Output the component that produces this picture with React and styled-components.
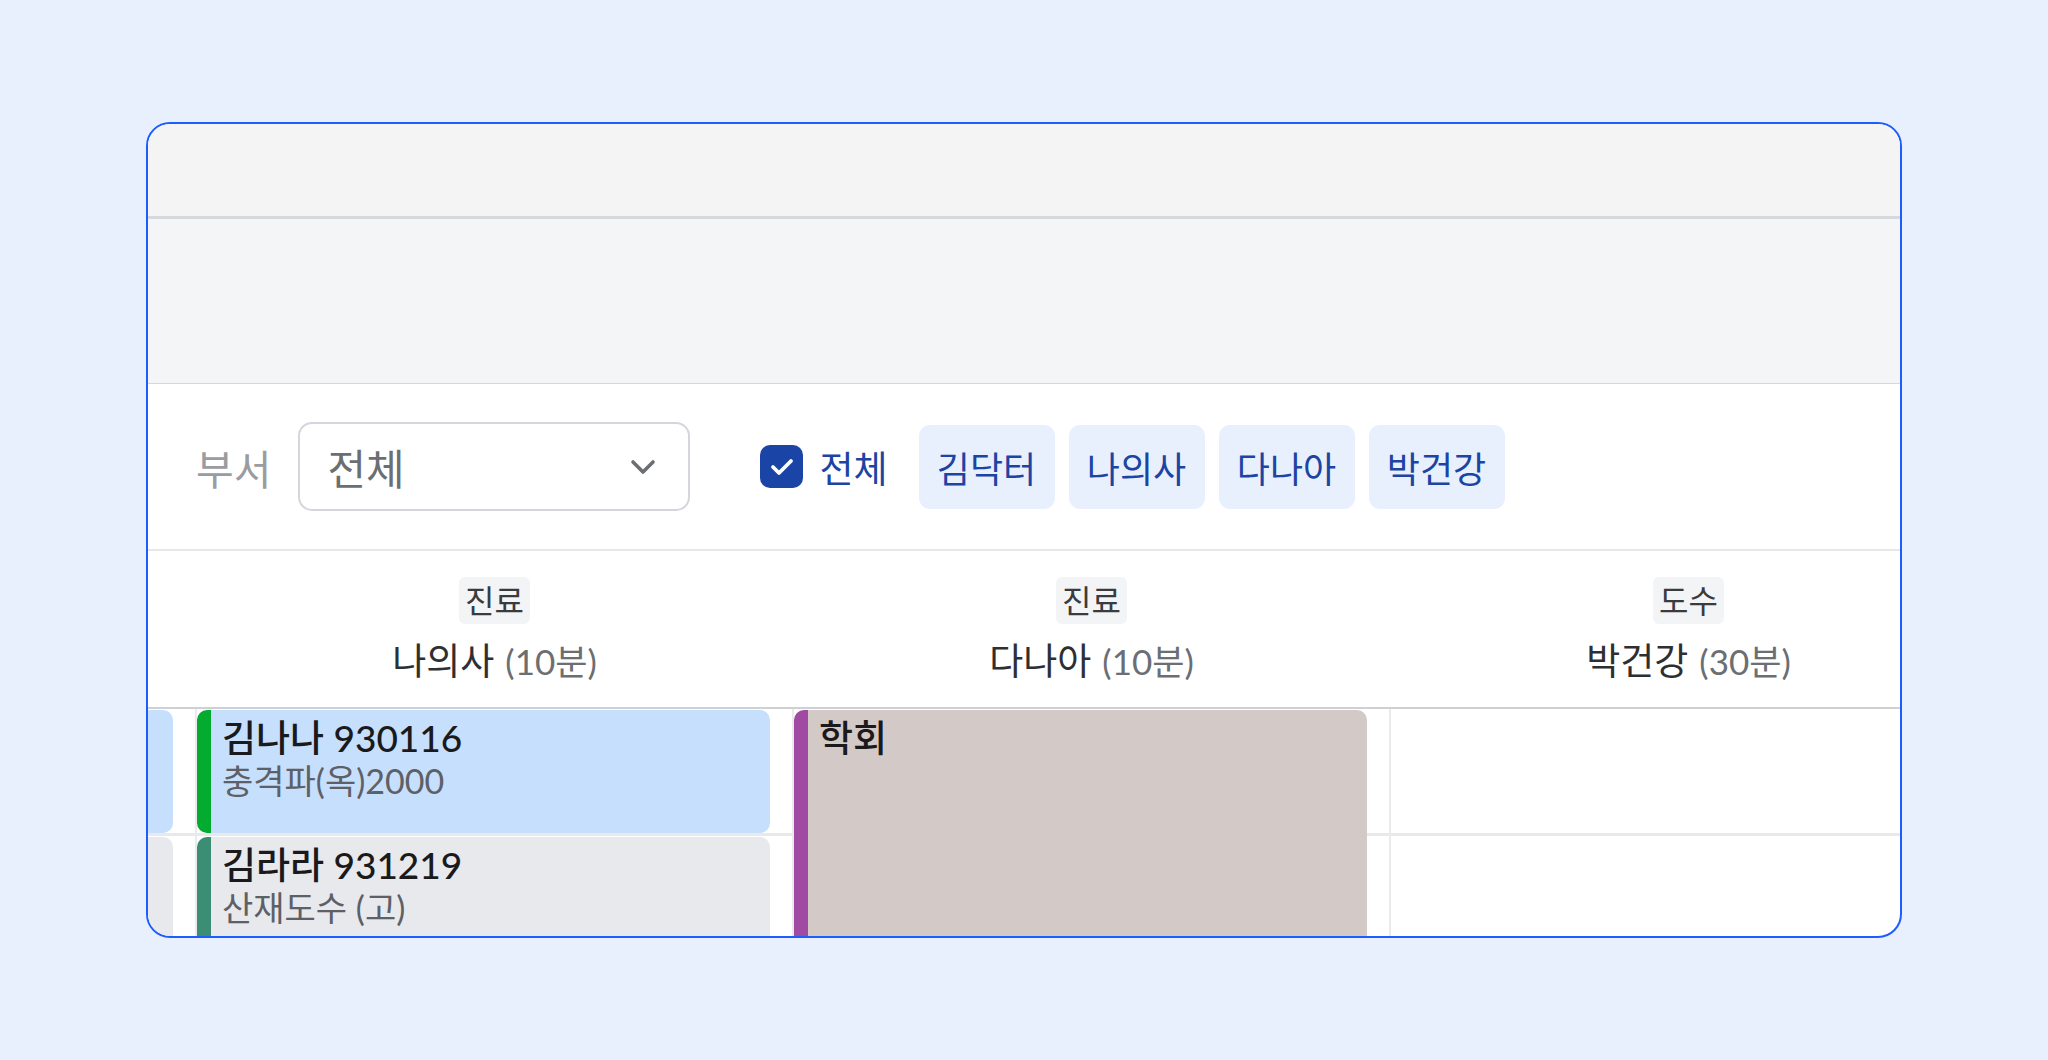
import { useEffect, useRef } from "react";
import styled, { createGlobalStyle } from "styled-components";

const GlobalStyle = createGlobalStyle`
  * { box-sizing: border-box; }
  body {
    margin: 0;
    background: #e8f0fe;
    font-family: Lato, "Noto Sans CJK KR", sans-serif;
  }
`;

const COL_W = 597;

const Page = styled.div`
  padding: 122px 146px;
`;

const Card = styled.div`
  height: 816px;
  background: #ffffff;
  border: 2px solid #1d5cff;
  border-radius: 24px;
  overflow: hidden;
  display: flex;
  flex-direction: column;
`;

const TopBar = styled.div`
  flex: 0 0 95px;
  background: #f4f4f4;
  border-bottom: 3px solid #d5d8dc;
`;

const SubBar = styled.div`
  flex: 0 0 165px;
  background: #f4f5f7;
  border-bottom: 1px solid #d5d8dc;
`;

const FilterRow = styled.div`
  flex: 0 0 167px;
  display: flex;
  align-items: center;
  padding-left: 48px;
  border-bottom: 2px solid #e6e7eb;
`;

const FieldLabel = styled.span`
  font-size: 41px;
  color: #9a9ca1;
  margin-right: 27px;
`;

const Select = styled.div`
  width: 392px;
  height: 89px;
  border: 2.5px solid #d3d6db;
  border-radius: 14px;
  display: flex;
  align-items: center;
  justify-content: space-between;
  padding: 0 32px 0 27px;
  font-size: 42px;
  color: #6b6e73;
  margin-right: 70px;
`;

const CheckLabel = styled.label`
  display: flex;
  align-items: center;
  gap: 16px;
  font-size: 37px;
  color: #1b44a3;
  margin-right: 31px;
`;

const CheckBox = styled.span`
  width: 43px;
  height: 43px;
  border-radius: 10px;
  background: #1a45a6;
  display: flex;
  align-items: center;
  justify-content: center;
`;

const Chips = styled.div`
  display: flex;
  gap: 14px;
`;

const Chip = styled.button`
  width: 136px;
  height: 84px;
  border: none;
  border-radius: 11px;
  background: #e8f0fe;
  color: #1b44a3;
  font-family: inherit;
  font-size: 36px;
  padding: 0;
`;

const ScrollView = styled.div`
  flex: 1;
  overflow: hidden;
`;

const Track = styled.div`
  width: ${COL_W * 4}px;
`;

const HeaderRow = styled.div`
  display: grid;
  grid-template-columns: repeat(4, ${COL_W}px);
  height: 158px;
  border-bottom: 2px solid #cfd0d4;
`;

const HeaderCell = styled.div`
  display: flex;
  flex-direction: column;
  align-items: center;
  padding-top: 26px;
  padding-left: 2px;
`;

const Tag = styled.span`
  height: 47px;
  padding: 0 6px;
  border-radius: 6px;
  background: #f3f4f6;
  color: #3a3b3f;
  font-size: 32px;
  line-height: 47px;
`;

const DoctorName = styled.div`
  margin-top: 8px;
  font-size: 37px;
  color: #2e2f33;
  display: flex;
  align-items: baseline;
  gap: 11px;
`;

const Duration = styled.span`
  font-size: 35px;
  color: #6b6e73;
`;

const Body = styled.div`
  display: grid;
  grid-template-columns: repeat(4, ${COL_W}px);
  grid-template-rows: repeat(3, 127px);
`;

const Slot = styled.div`
  grid-column: ${(p) => p.$col};
  grid-row: ${(p) => p.$row};
  border-left: 2px solid #ebebee;
  border-bottom: 3px solid #e8e9ec;
`;

const Event = styled.div`
  grid-column: ${(p) => p.$col};
  grid-row: ${(p) => p.$row} / span ${(p) => p.$span || 1};
  margin: 1px 22px 3px 2px;
  background: ${(p) => p.$bg};
  border-left: 14px solid ${(p) => p.$bar};
  border-radius: 10px;
  padding: 6px 11px;
  overflow: hidden;
`;

const EventTitle = styled.div`
  font-size: 37px;
  font-weight: 500;
  color: #1a1a1d;
  line-height: 44px;
`;

const EventSub = styled.div`
  font-size: 34px;
  color: #5d6066;
  line-height: 42px;
`;

const doctors = ["김닥터", "나의사", "다나아", "박건강"];

// 첫 번째 열(김닥터)은 스크롤로 가려져 있어 머리글을 비워 둠
const columns = [
  null,
  { tag: "진료", name: "나의사", min: 10 },
  { tag: "진료", name: "다나아", min: 10 },
  { tag: "도수", name: "박건강", min: 30 },
];

const events = [
  { col: 1, row: 1, bg: "#c6dffc", bar: "#3b82f6" },
  { col: 1, row: 2, bg: "#e8e9ed", bar: "#9ca3af" },
  { col: 2, row: 1, bg: "#c6dffc", bar: "#03ac2e", title: "김나나 930116", sub: "충격파(옥)2000" },
  { col: 2, row: 2, bg: "#e8e9ed", bar: "#3b8e74", title: "김라라 931219", sub: "산재도수 (고)" },
  { col: 3, row: 1, span: 3, bg: "#d3c9c7", bar: "#a04aa3", title: "학회" },
];

function Chevron() {
  return (
    <svg width="26" height="16" viewBox="0 0 26 16" fill="none">
      <polyline
        points="3,3 13,13 23,3"
        stroke="#6b6e73"
        strokeWidth="3.6"
        strokeLinecap="round"
        strokeLinejoin="round"
      />
    </svg>
  );
}

function Check() {
  return (
    <svg width="26" height="20" viewBox="0 0 26 20" fill="none">
      <polyline
        points="4,10 10,16 22,4"
        stroke="#ffffff"
        strokeWidth="3.8"
        strokeLinecap="round"
        strokeLinejoin="round"
      />
    </svg>
  );
}

function Schedule() {
  const ref = useRef(null);
  useEffect(() => {
    if (ref.current) ref.current.scrollLeft = 550;
  }, []);
  return (
    <ScrollView ref={ref}>
      <Track>
        <HeaderRow>
          {columns.map((c, i) => (
            <HeaderCell key={i}>
              {c && (
                <>
                  <Tag>{c.tag}</Tag>
                  <DoctorName>
                    {c.name}
                    <Duration>({c.min}분)</Duration>
                  </DoctorName>
                </>
              )}
            </HeaderCell>
          ))}
        </HeaderRow>
        <Body>
          {[1, 2, 3, 4].map((col) =>
            [1, 2, 3].map((row) => (
              <Slot key={`${col}-${row}`} $col={col} $row={row} />
            ))
          )}
          {events.map((e, i) => (
            <Event key={i} $col={e.col} $row={e.row} $span={e.span} $bg={e.bg} $bar={e.bar}>
              {e.title && <EventTitle>{e.title}</EventTitle>}
              {e.sub && <EventSub>{e.sub}</EventSub>}
            </Event>
          ))}
        </Body>
      </Track>
    </ScrollView>
  );
}

export default function App() {
  return (
    <>
      <GlobalStyle />
      <Page>
        <Card>
          <TopBar />
          <SubBar />
          <FilterRow>
            <FieldLabel>부서</FieldLabel>
            <Select>
              전체
              <Chevron />
            </Select>
            <CheckLabel>
              <CheckBox>
                <Check />
              </CheckBox>
              전체
            </CheckLabel>
            <Chips>
              {doctors.map((d) => (
                <Chip key={d}>{d}</Chip>
              ))}
            </Chips>
          </FilterRow>
          <Schedule />
        </Card>
      </Page>
    </>
  );
}
